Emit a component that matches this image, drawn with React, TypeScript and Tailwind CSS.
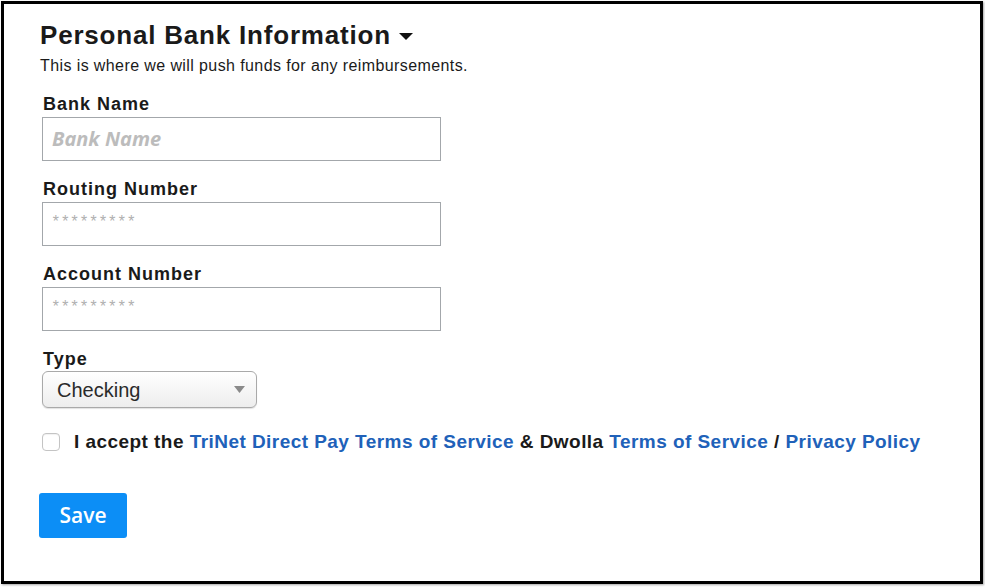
import React from "react";

const arial = { fontFamily: '"Liberation Sans", Arial, sans-serif' };

function Field({ label, placeholder, mask }: { label: string; placeholder: string; mask?: boolean }) {
  return (
    <div className="flex flex-col">
      <div className="h-[22px] text-[18px] leading-[22px] font-bold text-[#1a1a1a] ml-[1px] tracking-[1px]">{label}</div>
      <div className="mt-[2px] w-[399px] h-[44px] border border-[#a3a7ab] bg-white flex items-center pl-[9px]">
        {mask ? (
          <span className="text-[16px] italic text-[#b0b0b0] tracking-[3.2px] mt-[-4px]">{placeholder}</span>
        ) : (
          <span
            className="text-[20px] italic font-bold text-[#bcbcbc]"
            style={{ fontFamily: '"Open Sans", sans-serif' }}
          >
            {placeholder}
          </span>
        )}
      </div>
    </div>
  );
}

export default function App() {
  return (
    <div className="w-[985px] h-[587px] bg-white p-[1px]" style={arial}>
      <div className="w-[982px] h-[583px] border-[3px] border-black bg-white shadow-[1px_1px_2px_rgba(0,0,0,0.35)] pl-[36px] pt-[16px]">
        <div className="flex items-center h-[30px]">
          <span className="text-[26px] leading-[30px] font-bold text-[#1a1a1a] tracking-[0.8px]">Personal Bank Information</span>
          <svg width="14" height="8" viewBox="0 0 14 8" className="ml-[8px] mt-[3px]">
            <polygon points="0,0 14,0 7,7" fill="#111" />
          </svg>
        </div>
        <div className="mt-[6px] text-[16px] leading-[20px] text-[#1a1a1a] tracking-[0.4px]">
          This is where we will push funds for any reimbursements.
        </div>
        <div className="ml-[2px] mt-[17px] flex flex-col gap-[17px]">
          <Field label="Bank Name" placeholder="Bank Name" />
          <Field label="Routing Number" placeholder="*********" mask />
          <Field label="Account Number" placeholder="*********" mask />
          <div className="flex flex-col">
            <div className="h-[22px] text-[18px] leading-[22px] font-bold text-[#1a1a1a] ml-[1px] tracking-[1px]">Type</div>
            <div className="mt-[1px] w-[215px] h-[37px] rounded-[6px] border border-[#a9a9a9] bg-gradient-to-b from-white to-[#ededed] shadow-[0_1px_1px_rgba(0,0,0,0.12)] flex items-center pl-[14px] pr-[11px]">
              <span className="text-[20px] text-[#2a2a2a] flex-1">Checking</span>
              <svg width="11" height="8" viewBox="0 0 11 8">
                <polygon points="0,0 11,0 5.5,7" fill="#8a8a8a" />
              </svg>
            </div>
          </div>
        </div>
        <div className="ml-[2px] mt-[23px] flex items-center">
          <div className="w-[18px] h-[18px] rounded-[4px] border border-[#c4c4c4] bg-white shadow-[inset_0_1px_1px_rgba(0,0,0,0.06)]" />
          <div className="ml-[14px] text-[19px] leading-[22px] font-bold text-[#1a1a1a] whitespace-nowrap tracking-[0.45px]">
            I accept the <span className="text-[#2061b9]">TriNet Direct Pay Terms of Service</span> &amp; Dwolla{" "}
            <span className="text-[#2061b9]">Terms of Service</span> / <span className="text-[#2061b9]">Privacy Policy</span>
          </div>
        </div>
        <button
          className="mt-[40px] ml-[-1px] w-[88px] h-[45px] rounded-[3px] bg-[#0c8ef6] text-white text-[21px] font-semibold flex items-center justify-center"
          style={{ fontFamily: '"Open Sans", sans-serif' }}
        >
          Save
        </button>
      </div>
    </div>
  );
}
